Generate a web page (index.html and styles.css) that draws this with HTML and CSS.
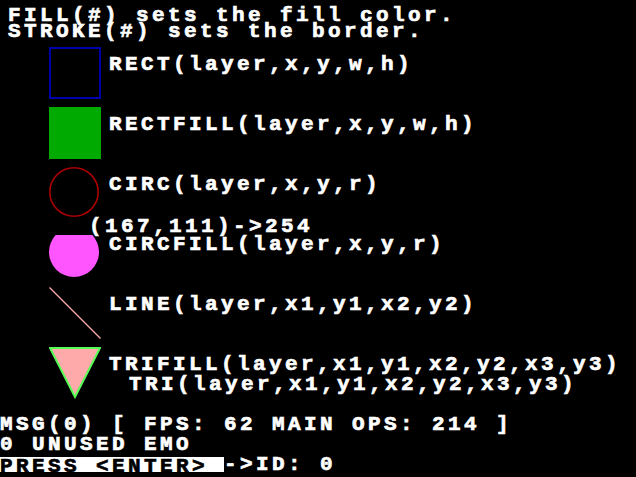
FILE: index.html
```html
<!DOCTYPE html>
<html>
<head>
<meta charset="utf-8">
<link rel="stylesheet" href="styles.css">
</head>
<body>
<main class="screen">
  <header class="intro">
    <p>FILL(#) sets the fill color.</p>
    <p>STROKE(#) sets the border.</p>
  </header>
  <section class="demos">
    <div class="demo">
      <svg class="shape" width="52" height="52" viewBox="0 0 52 52"><rect x="1" y="1" width="50" height="50" fill="none" stroke="#0000aa" stroke-width="2" shape-rendering="crispEdges"/></svg>
      <div class="label"><p>RECT(layer,x,y,w,h)</p></div>
    </div>
    <div class="demo">
      <svg class="shape" width="52" height="52" viewBox="0 0 52 52"><rect x="0" y="0" width="52" height="52" fill="#00aa00" shape-rendering="crispEdges"/></svg>
      <div class="label"><p>RECTFILL(layer,x,y,w,h)</p></div>
    </div>
    <div class="demo">
      <svg class="shape" width="52" height="52" viewBox="0 0 52 52"><circle cx="25" cy="25" r="24.2" fill="none" stroke="#aa0000" stroke-width="1.6"/></svg>
      <div class="label"><p>CIRC(layer,x,y,r)</p></div>
    </div>
    <div class="demo">
      <svg class="shape" width="52" height="52" viewBox="0 0 52 52"><defs><clipPath id="cut"><rect x="0" y="8" width="52" height="44"/></clipPath></defs><circle cx="25" cy="25" r="25" fill="#ff55ff" clip-path="url(#cut)"/></svg>
      <div class="label"><p>CIRCFILL(layer,x,y,r)</p></div>
    </div>
    <div class="demo">
      <svg class="shape" width="52" height="52" viewBox="0 0 52 52"><line x1="0.5" y1="0.5" x2="51.5" y2="51.5" stroke="#ffaaaa" stroke-width="1.2"/></svg>
      <div class="label"><p>LINE(layer,x1,y1,x2,y2)</p></div>
    </div>
    <div class="demo">
      <svg class="shape" width="52" height="52" viewBox="0 0 52 52"><polygon points="1,1 51,1 26,50" fill="#ffaaaa" stroke="#55ff55" stroke-width="2" stroke-linejoin="miter"/></svg>
      <div class="label">
        <p>TRIFILL(layer,x1,y1,x2,y2,x3,y3)</p>
        <p class="indent">TRI(layer,x1,y1,x2,y2,x3,y3)</p>
      </div>
    </div>
  </section>
  <div class="probe">(167,111)-&gt;254</div>
  <footer class="status">
    <p>MSG(0) [ FPS: 62 MAIN OPS: 214 ]</p>
    <p>0 UNUSED EMO</p>
    <p class="prompt"><span class="inverse">PRESS &lt;ENTER&gt; </span><span>-&gt;ID: 0</span></p>
  </footer>
</main>
</body>
</html>
```

FILE: styles.css
```css
* {
  box-sizing: border-box;
}

html, body {
  margin: 0;
  padding: 0;
  background: #000;
}

.screen {
  position: relative;
  width: 636px;
  height: 477px;
  overflow: hidden;
  background: #000;
  color: #fff;
  font-family: "Liberation Mono", "Courier New", monospace;
  font-weight: bold;
  font-size: 21px;
  letter-spacing: 3.4px;
  -webkit-text-stroke: 0.7px currentColor;
}

p {
  margin: 0;
  white-space: pre;
}

.intro {
  padding: 8px 0 0 8px;
  line-height: 16px;
}

.demos {
  margin-top: 7px;
  display: flex;
  flex-direction: column;
}

.demo {
  height: 60px;
  display: flex;
  align-items: flex-start;
  padding-left: 49px;
}

.shape {
  flex: none;
  display: block;
}

.label {
  margin-left: 8px;
  padding-top: 10px;
  line-height: 16px;
}

.indent {
  margin-top: 4px;
  padding-left: 20px;
}

.probe {
  position: absolute;
  left: 89px;
  top: 219px;
  line-height: 16px;
  white-space: pre;
}

.status {
  padding-top: 8px;
  line-height: 20px;
}

.prompt {
  display: flex;
  align-items: flex-start;
  height: 20px;
}

.inverse {
  display: inline-block;
  height: 15px;
  line-height: 19px;
  overflow: hidden;
  margin-top: 2px;
  background: #fff;
  color: #000;
}
```
